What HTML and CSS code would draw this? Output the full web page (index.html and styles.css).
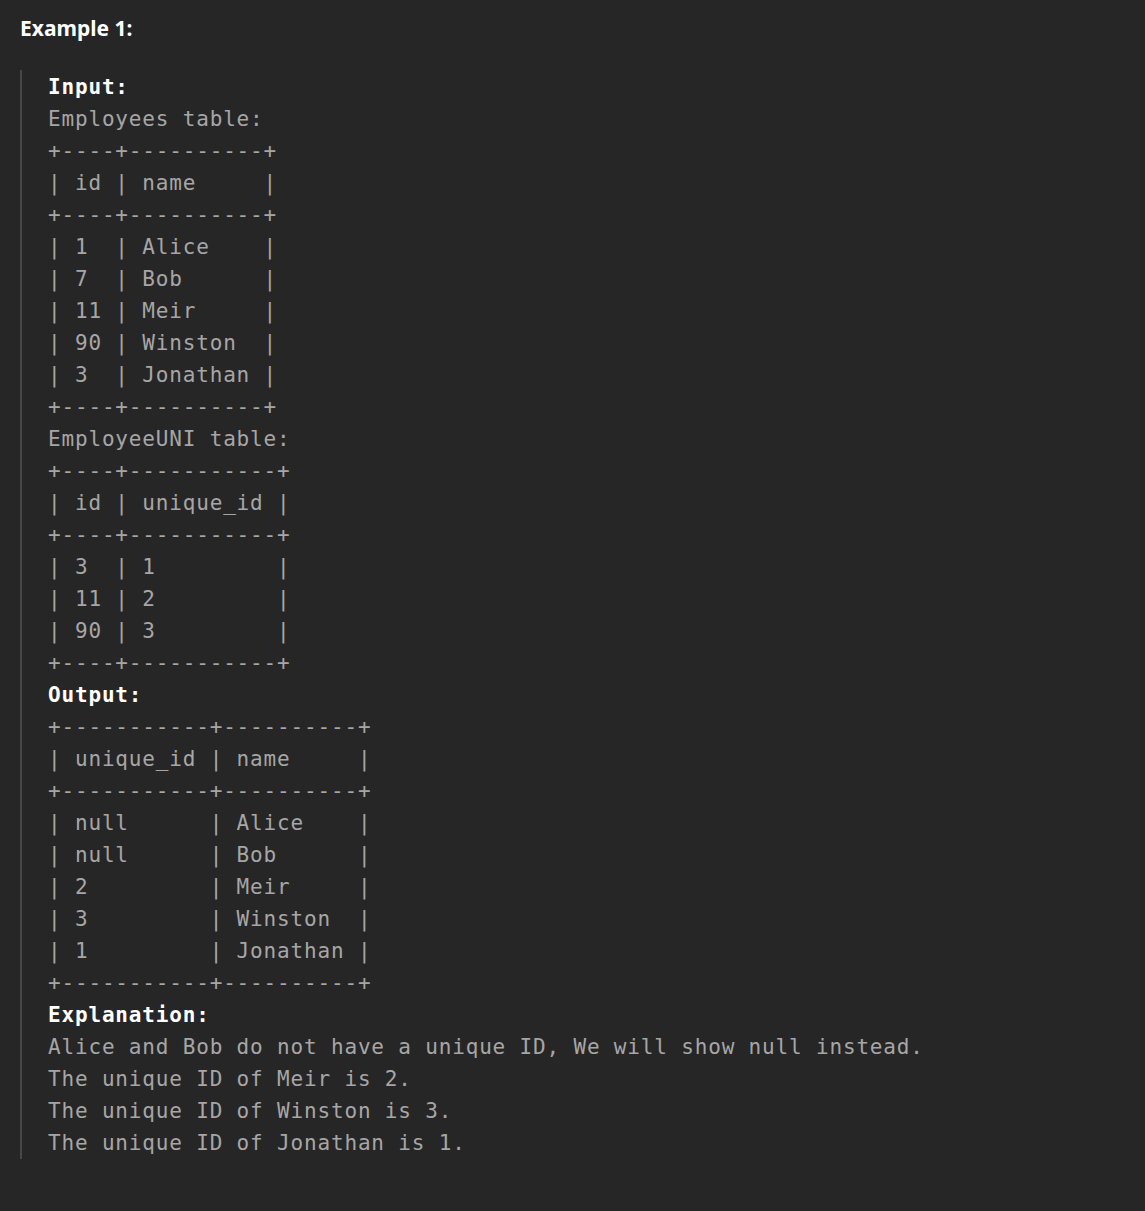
FILE: index.html
```html
<!DOCTYPE html>
<html>
<head>
<meta charset="utf-8">
<link rel="stylesheet" href="styles.css">
</head>
<body>
<div class="example">
<p class="title">Example 1:</p>
<pre class="block"><strong>Input:</strong>
Employees table:
+----+----------+
| id | name     |
+----+----------+
| 1  | Alice    |
| 7  | Bob      |
| 11 | Meir     |
| 90 | Winston  |
| 3  | Jonathan |
+----+----------+
EmployeeUNI table:
+----+-----------+
| id | unique_id |
+----+-----------+
| 3  | 1         |
| 11 | 2         |
| 90 | 3         |
+----+-----------+
<strong>Output:</strong>
+-----------+----------+
| unique_id | name     |
+-----------+----------+
| null      | Alice    |
| null      | Bob      |
| 2         | Meir     |
| 3         | Winston  |
| 1         | Jonathan |
+-----------+----------+
<strong>Explanation:</strong>
Alice and Bob do not have a unique ID, We will show null instead.
The unique ID of Meir is 2.
The unique ID of Winston is 3.
The unique ID of Jonathan is 1.</pre>
</div>
</body>
</html>
```
FILE: styles.css
```css
html, body {
  margin: 0;
  padding: 0;
  background: #262626;
}
.example {
  padding: 14px 20px 0 20px;
  height: 1197px;
}
.title {
  margin: 0;
  font-family: "Noto Sans", "Open Sans", sans-serif;
  font-weight: 700;
  font-size: 21px;
  line-height: 28px;
  color: #ffffff;
}
.block {
  margin: 28px 0 0 0;
  padding: 1px 0 0 26px;
  border-left: 2px solid #474747;
  font-family: "DejaVu Sans Mono", monospace;
  font-size: 21px;
  line-height: 32px;
  letter-spacing: 0.83px;
  color: #a6a6a6;
  white-space: pre;
}
.block strong {
  color: #ffffff;
  font-weight: 700;
}
```
